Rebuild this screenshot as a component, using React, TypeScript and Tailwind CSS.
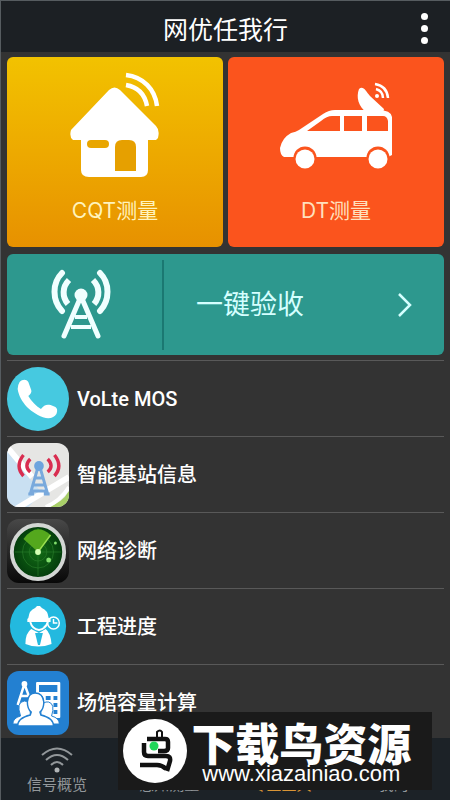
import type { ReactNode } from 'react'

function HouseIcon() {
    return (
        <svg width="90" height="108" viewBox="0 0 90 108" fill="none" aria-hidden="true">
            <path d="M39 19 Q44.500 14 50 19 L86 55 Q90 59 88 67 L86 69 H78 V99 Q78 106 71 106 H19 Q11 106 11 99 V69 H3 Q-1 66 1 59 Z" fill="#fff" />
            <rect x="17" y="69" width="22" height="8" rx="4" fill="#e9a600" />
            <path d="M45 100 V76 Q45 69 52 69 H59 Q66 69 66 76 V100 Z" fill="#e6a000" />
            <path d="M56 14 C68 16 75 24 77 35" stroke="#fff" strokeWidth="4.500" />
            <path d="M56 4 C73 6 85 18 87 35" stroke="#fff" strokeWidth="4.500" />
        </svg>
    )
}

function VanIcon() {
    return (
        <svg width="114" height="90" viewBox="0 0 114 90" fill="none" aria-hidden="true">
            <path d="M5 76 Q1 74 1 67 Q3 57 12 52 Q17 51 20 49 L44 33 Q50 29 56 29 H99 Q112 29 113 36 V74 L109 76 Z" fill="#fff" />
            <path d="M28 50 L42 40 Q48 35 53 35 H61 V50 Z M65 35 H83 V50 H65 Z M88 35 H104 Q108 35 109 40 V50 H88 Z" fill="#fb541d" />
            <circle cx="26" cy="77" r="11.500" fill="#fb541d" />
            <circle cx="99" cy="77" r="11.500" fill="#fb541d" />
            <circle cx="26" cy="78" r="9.500" fill="#fff" />
            <circle cx="99" cy="78" r="9.500" fill="#fff" />
            <path d="M80 8 C84 4 87 10 91 15 L105 28 L104 32 H88 C79 25 77 16 80 8 Z" fill="#fff" />
            <circle cx="98" cy="15" r="2" fill="#fff" />
            <path d="M97 8 Q104 10 104 17 M96 3 Q108 5 109 17" stroke="#fff" strokeWidth="2.500" />
        </svg>
    )
}

function TowerIcon() {
    return (
        <svg width="60" height="72" viewBox="0 0 60 72" fill="none" stroke="#f0ffff" strokeLinecap="round" strokeLinejoin="round" aria-hidden="true">
            <circle cx="30" cy="26" r="6.500" fill="#f0ffff" stroke="none" />
            <path d="M28 32 L13 67 M32 32 L47 67" strokeWidth="5" />
            <path d="M24 48 H36 M20 58 H40" strokeWidth="4" strokeLinecap="butt" />
            <path d="M18 11 C11 18 11 28 17 35 M42 11 C49 18 49 28 43 35" strokeWidth="6" strokeLinecap="butt" />
            <path d="M11 4 C1 14 1 31 11 42 M49 4 C59 14 59 31 49 42" strokeWidth="6" />
        </svg>
    )
}

function PhoneIcon() {
    return (
        <svg className="h-16 w-[62px]" viewBox="0 0 64 64" preserveAspectRatio="none" aria-hidden="true">
            <circle cx="32" cy="32" r="32" fill="#46c9e0" />
            <path d="M13 15 C16 12 20 12 22 15 L25 23 Q26 26 22 29 C25 34 30 39 35 42 C38 38 41 37 45 38 L50 40 Q53 42 51 47 Q48 52 40 51 C25 47 13 35 11 22 Q11 18 13 15 Z" fill="#fff" />
        </svg>
    )
}

function StationIcon() {
    return (
        <svg className="h-16 w-[62px] rounded-xl" viewBox="0 0 64 64" preserveAspectRatio="none" fill="none" aria-hidden="true">
            <rect width="64" height="64" fill="#e6e6e4" />
            <path d="M0 8 L36 50 L22 64 H0 Z" fill="#c9e0f2" />
            <path d="M0 4 L26 34 M9 66 L64 34" stroke="#fff" strokeWidth="6" />
            <path d="M42 64 Q57 60 64 48 V64 Z" fill="#a8cf68" />
            <path d="M40 64 Q55 58 64 44" stroke="#fff" strokeWidth="4" />
            <g stroke="#79a9dc" strokeWidth="3">
                <path d="M32 24 L24 51 M34 24 L42 51 M29 35 H37 M27 42 H39 M25 48 H41 M22 51 H28 M38 51 H44" />
            </g>
            <circle cx="33" cy="23" r="5" fill="#6ea4de" />
            <path d="M24 16 Q17 23 24 29 M42 16 Q49 23 42 29 M17 12 Q8 23 17 33 M49 12 Q58 23 49 33" stroke="#d92d50" strokeWidth="3.500" />
        </svg>
    )
}

function RadarIcon() {
    return (
        <svg className="h-16 w-[62px] rounded-xl" viewBox="0 0 64 64" preserveAspectRatio="none" fill="none" aria-hidden="true">
            <defs>
                <linearGradient id="radarFrame" x2="0" y2="1">
                    <stop stopColor="#484848" />
                    <stop offset="1" stopColor="#080808" />
                </linearGradient>
                <radialGradient id="radarGlass">
                    <stop stopColor="#126c15" />
                    <stop offset="1" stopColor="#033b0c" />
                </radialGradient>
            </defs>
            <rect width="64" height="64" fill="url(#radarFrame)" />
            <circle cx="32" cy="33" r="27" fill="url(#radarGlass)" stroke="#d3d6d4" strokeWidth="4" />
            <g stroke="#287a29" strokeWidth="0.700">
                <circle cx="32" cy="33" r="16" />
                <circle cx="32" cy="33" r="9" />
                <path d="M8 33 H56 M32 9 V57" />
            </g>
            <path d="M32 33 L17 20 Q30 3 45 16 Z" fill="#54a81d" />
            <path d="M32 33 L45 16" stroke="#9bdf50" strokeWidth="1.500" />
            <circle cx="32" cy="33" r="3" fill="#d5ffb4" />
            <circle cx="43" cy="41" r="2.500" fill="#82df6e" />
            <circle cx="50" cy="24" r="1.500" fill="#82df6e" />
        </svg>
    )
}

function EngineerIcon() {
    return (
        <svg className="h-16 w-[62px]" viewBox="0 0 64 64" preserveAspectRatio="none" fill="none" aria-hidden="true">
            <circle cx="32" cy="31" r="29" fill="#23b9df" />
            <path d="M22 23 Q23 15 29 13 L31 11 H34 L36 13 Q42 15 43 23 L45 24 V27 H21 V24 Z" fill="#fff" />
            <path d="M24 27 Q26 34 33 35 Q40 34 42 27" stroke="#fff" strokeWidth="2" />
            <path d="M25 34 Q19 38 19 49 Q32 54 46 49 Q45 38 40 34 L33 38 Z" fill="#fff" />
            <path d="M29 38 H37 L34 50 H32 Z" fill="#23b9df" />
            <circle cx="48" cy="28" r="6" stroke="#fff" strokeWidth="1.500" />
            <path d="M48 24 V28 H52 M42 29 L38 32" stroke="#fff" strokeWidth="1.500" />
        </svg>
    )
}

function VenueIcon() {
    return (
        <svg className="h-16 w-[62px] rounded-xl" viewBox="0 0 64 64" preserveAspectRatio="none" fill="none" aria-hidden="true">
            <rect width="64" height="64" fill="#2380d1" />
            <circle cx="18" cy="13" r="3" fill="#fff" />
            <path d="M18 13 L11 34 M18 13 L26 34 M14 25 H23" stroke="#fff" strokeWidth="2.500" />
            <rect x="30" y="11" width="25" height="36" rx="1" fill="#fff" />
            <path d="M33 14 H52 V21 H33 Z M33 25 H37 V29 H33 Z M40 25 H45 V29 H40 Z M48 25 H52 V29 H48 Z M48 32 H52 V36 H48 Z M48 39 H52 V43 H48 Z" fill="#2380d1" />
            <path d="M6 53 Q6 47 14 45 Q9 31 18 30 Q23 30 24 37 V53 Z M35 53 V37 Q37 30 43 31 Q50 33 46 45 Q54 47 54 53 Z" fill="#fff" stroke="#2380d1" strokeWidth="1" />
            <path d="M11 55 Q11 47 24 44 L25 41 Q21 38 21 31 Q22 22 29 22 Q37 22 38 31 Q38 38 34 41 L35 44 Q48 47 48 55 Z" fill="#fff" stroke="#2380d1" strokeWidth="1.500" />
        </svg>
    )
}

const tools: { label: string; icon: ReactNode }[] = [
    { label: 'VoLte MOS', icon: <PhoneIcon /> },
    { label: '智能基站信息', icon: <StationIcon /> },
    { label: '网络诊断', icon: <RadarIcon /> },
    { label: '工程进度', icon: <EngineerIcon /> },
    { label: '场馆容量计算', icon: <VenueIcon /> },
]

const tabs = [
    { label: '信号概览', active: false },
    { label: '感知测量', active: false },
    { label: '专业工具', active: true },
    { label: '我的', active: false },
]

function SignalIcon() {
    return (
        <svg width="32" height="26" viewBox="0 0 32 26" fill="none" stroke="#92979a" strokeWidth="2" aria-hidden="true">
            <path d="M1 8 Q16 -5 31 8 M5 13 Q16 3 27 13 M10 18 Q16 12 22 18" />
            <circle cx="16" cy="23" r="2.500" fill="#b0b4b6" stroke="none" />
        </svg>
    )
}

function Watermark() {
    return (
        <div className="absolute bottom-[10px] left-[26%] flex h-[78px] w-[70%] items-center bg-[#1a1a1a] pl-[5px] text-white">
            <svg className="size-16 shrink-0" viewBox="0 0 64 64" fill="none" aria-hidden="true">
                <circle cx="32" cy="32" r="32" fill="#fff" />
                <path d="M24 20 H42 Q45 20 45 23 V29 Q45 32 41 32 H35 M21 24 V33 Q21 37 25 37 H43 Q48 37 47 42 L44 52 M17 46 H34 Q39 46 43 50" stroke="#111" strokeWidth="4.500" />
                <path d="M34 19 V13 Q37 10 39 13 V18" stroke="#111" strokeWidth="2" />
                <circle cx="31" cy="27" r="4.500" fill="#20d659" />
            </svg>
            <div className="flex-1 pt-[10px] pr-4 text-center whitespace-nowrap">
                <p className="text-[44px] leading-9 font-black">下载鸟资源</p>
                <p className="font-['Liberation_Sans',sans-serif] text-[22px] leading-5">www.xiazainiao.com</p>
            </div>
        </div>
    )
}

export default function App() {
    return (
        <div className="relative flex h-dvh flex-col overflow-hidden border-t border-l border-[#565c60] bg-[#333] font-['Roboto','Noto_Sans_CJK_SC',sans-serif] text-white">
            <header className="relative flex h-[51px] shrink-0 items-center justify-center bg-[#1c2024] pt-2">
                <h1 className="text-[25px] leading-8 font-normal">网优任我行</h1>
                <button type="button" aria-label="菜单" className="absolute top-3 right-[22px] flex flex-col gap-[5px]">
                    <span className="size-[7px] rounded-full bg-white" />
                    <span className="size-[7px] rounded-full bg-white" />
                    <span className="size-[7px] rounded-full bg-white" />
                </button>
            </header>

            <main className="min-h-0 flex-1 overflow-hidden px-[6px] pt-[5px]">
                <div className="grid grid-cols-2 gap-[5px] font-['Inter','Noto_Sans_CJK_SC',sans-serif] text-[21px] leading-8">
                    <button type="button" className="flex h-[190px] flex-col items-center justify-between rounded-md bg-linear-to-b from-[#f2c200] to-[#e79100] pt-[14px] pb-5">
                        <HouseIcon />
                        <span className="text-[#fff3bd]">CQT测量</span>
                    </button>
                    <button type="button" className="flex h-[190px] flex-col items-center justify-between rounded-md bg-[#fb541d] pt-6 pb-5">
                        <VanIcon />
                        <span className="text-[#ffe0bd]">DT测量</span>
                    </button>
                </div>

                <button type="button" className="mt-[7px] flex h-[101px] w-full items-center rounded-md bg-[#2d988e] text-[#d5ffff]">
                    <span className="flex w-[155px] justify-center pr-2">
                        <TowerIcon />
                    </span>
                    <span className="h-[90px] w-[2px] bg-[#1b7872]" />
                    <span className="flex-1 pl-8 text-left text-[27px] leading-9">一键验收</span>
                    <svg className="mr-8" width="14" height="26" viewBox="0 0 14 26" fill="none" stroke="currentColor" strokeWidth="2.500" aria-hidden="true">
                        <path d="M1 2 L12 13 L1 24" />
                    </svg>
                </button>

                <ul className="mt-[5px]">
                    {tools.map((tool) => (
                        <li key={tool.label} className="border-t border-[#595959]">
                            <button type="button" className="flex h-[75px] w-full items-center gap-2 pt-px text-left text-xl font-medium">
                                {tool.icon}
                                {tool.label}
                            </button>
                        </li>
                    ))}
                </ul>
            </main>

            <nav className="grid h-[62px] shrink-0 grid-cols-4 bg-[#1c2227]">
                {tabs.map((tab) => (
                    <button
                        key={tab.label}
                        type="button"
                        className={`flex flex-col items-center pt-[9px] text-[15px] leading-6 ${tab.active ? 'text-[#d99536]' : 'text-[#92979a]'}`}
                    >
                        <SignalIcon />
                        {tab.label}
                    </button>
                ))}
            </nav>

            <Watermark />
        </div>
    )
}
